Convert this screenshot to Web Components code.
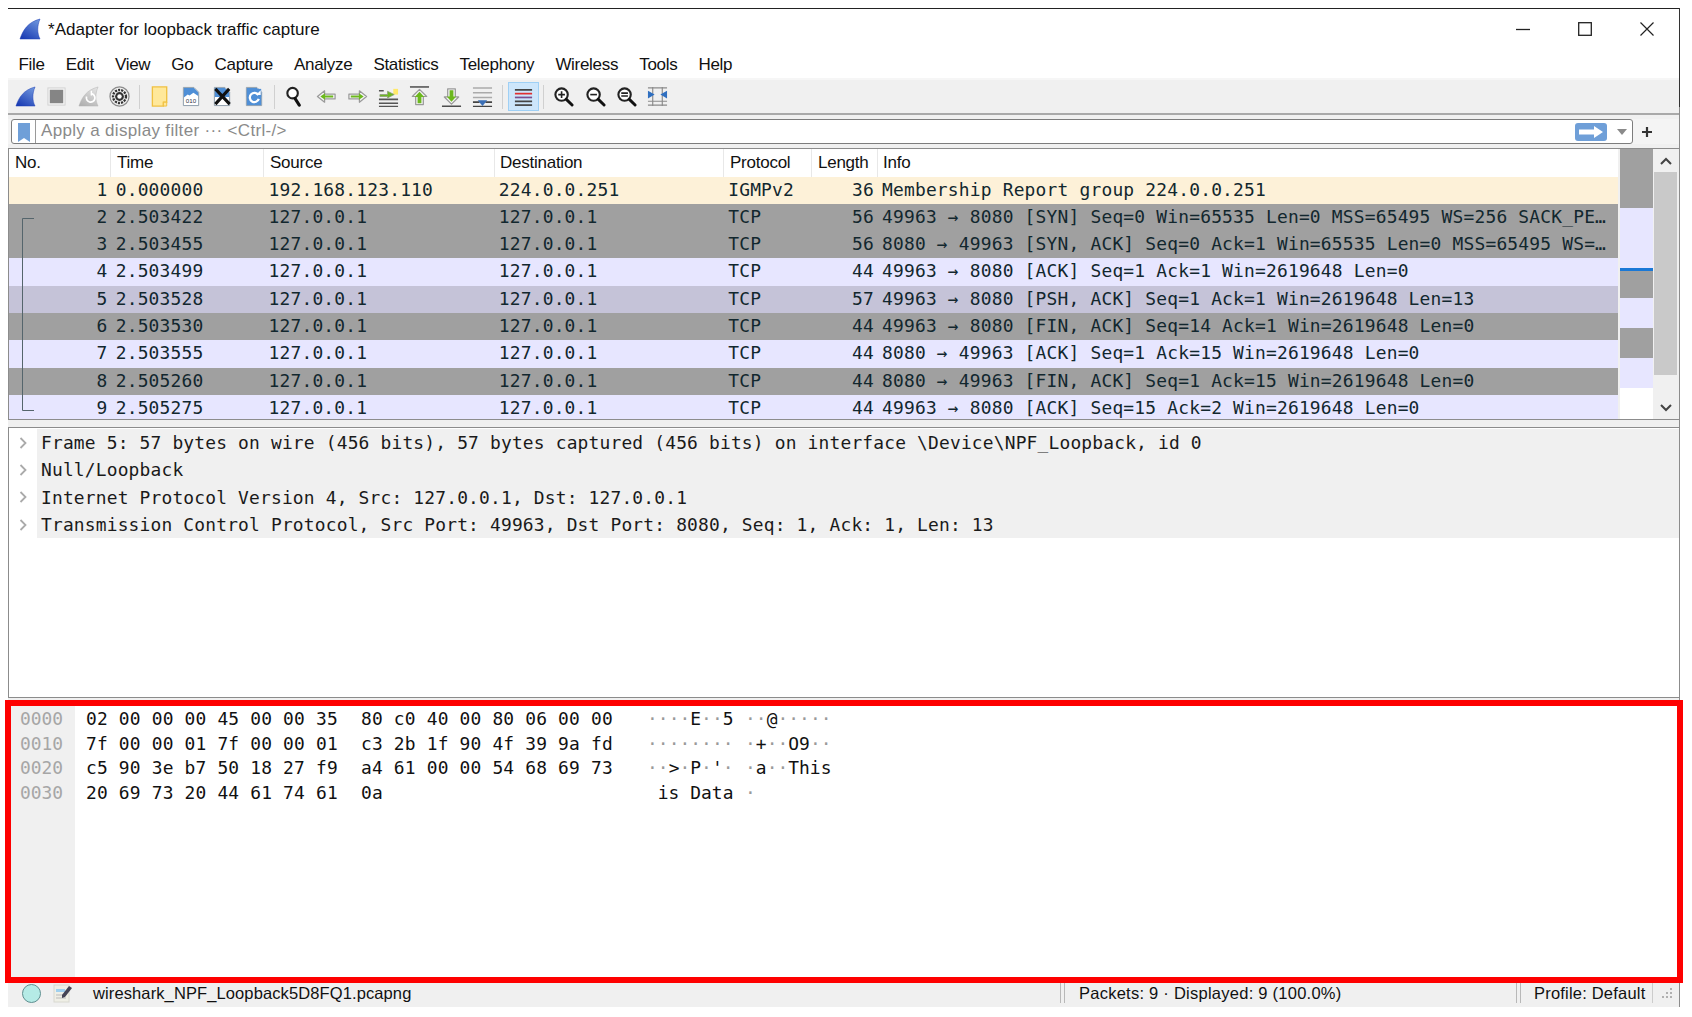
<!DOCTYPE html>
<html><head><meta charset="utf-8"><title>Wireshark</title>
<style>html,body{margin:0;padding:0;background:#fff;overflow:hidden}body{padding:8px 0 0 8px;font-family:"Liberation Sans",sans-serif}</style>
</head><body>
<ws-window>
  <ws-titlebar>*Adapter for loopback traffic capture</ws-titlebar>
  <ws-menubar></ws-menubar>
  <ws-toolbar></ws-toolbar>
  <ws-filter></ws-filter>
  <ws-packets></ws-packets>
  <ws-details></ws-details>
  <ws-bytes></ws-bytes>
  <ws-status></ws-status>
</ws-window>
<script>
const UI='"Liberation Sans",sans-serif', MONO='"DejaVu Sans Mono",monospace';
function shadow(el,html){el.attachShadow({mode:'open'}).innerHTML=html;return el.shadowRoot}
const fin=(top,bot,id)=>`<defs><linearGradient id="${id}" x1=".8" y1="0" x2=".2" y2="1"><stop offset="0" stop-color="${top}"/><stop offset="1" stop-color="${bot}"/></linearGradient></defs><path d="M1 21C4 12 9 4 21 1c-3 7-3 14 0 20z" fill="url(#${id})" stroke="${bot}" stroke-width=".5"/>`;
const page=(inner)=>`<path d="M2.500 1.500h11l5 5v14h-16z" fill="#fff" stroke="#8a9aa8"/><path d="M3 2h10.500l4.500 4.500v5H3z" fill="#4f8fd6"/>${inner}`;
const arrow=(rot)=>`<g transform="rotate(${rot} 11 11)"><path d="M1.500 11 9 5v3.500h11v5H9V17z" fill="#f4f4f4" stroke="#9a9a9a" stroke-width="1.300" stroke-linejoin="round"/><path d="M4.500 11 9.500 7.500v2.500h8.500v2H9.500v2.500z" fill="#6cb81e"/></g>`;
const upArrow=`<path d="M11 3.500 18.500 11H15v8.500H7V11H3.500z" fill="#f4f4f4" stroke="#9a9a9a" stroke-width="1.300" stroke-linejoin="round"/><path d="M11 6l5 5.500h-3V18H9v-6.500H6z" fill="#6cb81e"/>`;
const mag=(inner)=>`<circle cx="9" cy="9" r="6.500" fill="#fff" stroke="#222" stroke-width="2.200"/><path d="M14 14l6 6" stroke="#111" stroke-width="3" stroke-linecap="round"/>${inner}`;
const ICONS={
 start:fin('#6d94dc','#1a3cb4','g1'),
 stop:`<rect x="2" y="2" width="18" height="18" fill="#f2f2f2" stroke="#d2d2d2"/><rect x="4" y="4" width="14" height="14" fill="#858585"/>`,
 restart:fin('#e2e2e2','#b0b0b0','g2')+`<path d="M14 8a4.500 4.500 0 1 1-5 3" fill="none" stroke="#fff" stroke-width="1.800"/><path d="M14 5v5" stroke="#fff" stroke-width="1.500"/>`,
 options:`<circle cx="11" cy="11" r="10" fill="#f0f0f0" stroke="#8c8c8c" stroke-width="1.300"/><circle cx="11" cy="11" r="6.800" fill="none" stroke="#333" stroke-width="2.400" stroke-dasharray="2.200 1.100"/><circle cx="11" cy="11" r="4.600" fill="#333"/><circle cx="11" cy="11" r="2.300" fill="#fff"/>`,
 open:`<path d="M2.500 1h15v16h-3.500v4h-11.500z" fill="#ffe89a" stroke="#f0c040" stroke-width="1.400"/><path d="M14 21v-4h3.500v4z" fill="#ffe89a" stroke="#f0c040"/>`,
 save:`<path d="M2.500 1.500h11l5 5v14h-16z" fill="#fff" stroke="#8a9aa8"/><path d="M3 2h10.500l4.500 4.500v4L13 7l-4 3-2-1-4 3z" fill="#4f8fd6"/><text x="10.500" y="18" font-size="6.500" text-anchor="middle" font-family="${MONO}" fill="#334">010</text>`,
 close:page(`<path d="M3.500 3l15 16M18 3 3.500 19" stroke="#111" stroke-width="3.200"/>`),
 reload:page(`<rect x="3" y="3" width="15" height="17" fill="#4f8fd6"/><path d="M15 9.500a4.800 4.800 0 1 0 .5 4" fill="none" stroke="#fff" stroke-width="2.400"/><path d="M12.500 9.500h5v-5z" fill="#fff"/>`),
 find:`<circle cx="9" cy="7.500" r="5.500" fill="#fff" stroke="#222" stroke-width="2.200"/><path d="M11.500 13l4.500 7" stroke="#111" stroke-width="3.200" stroke-linecap="round"/>`,
 left:arrow(0), right:arrow(180),
 goto:`<path d="M1 14h20M1 18h20M1 21.500h20M1 5h5" stroke="#555" stroke-width="1.600" fill="none"/><path d="M16 3h5v6h-5z" fill="#ffe96a"/><path d="M2 9h8V5.500L17 9l-7 3.500V11H2z" fill="#6cb81e" stroke="#8a9a7a" stroke-width=".8"/>`,
 first:`<path d="M1 1h20" stroke="#444" stroke-width="1.500"/>${upArrow}`,
 last:`<path d="M1 21.200h20" stroke="#444" stroke-width="1.500"/><g transform="rotate(180 11 11) translate(0 -.5)">${upArrow}</g>`,
 bottom:`<path d="M1 2h20M1 7h20M1 12h20" stroke="#aaa" stroke-width="1.500"/><path d="M1 17h7M14 17h7M1 21.500h20" stroke="#444" stroke-width="1.800"/><path d="M6 15h10l-5 6z" fill="#3b6fb6"/>`,
 colorize:`<path d="M2 4h18M2 16h18" stroke="#444" stroke-width="1.800"/><path d="M2 8h18" stroke="#e03030" stroke-width="1.800"/><path d="M2 12h18" stroke="#7a4f90" stroke-width="1.800"/><path d="M2 20h18" stroke="#444" stroke-width="1.800"/>`,
 zin:mag(`<path d="M5.500 9h7M9 5.500v7" stroke="#222" stroke-width="1.700"/>`),
 zout:mag(`<path d="M5.500 9h7" stroke="#222" stroke-width="1.700"/>`),
 zreset:mag(`<path d="M5.500 7.500h7M5.500 10.500h7" stroke="#222" stroke-width="1.700"/>`),
 resize:`<path d="M1 2h20M1 16h20M1 20h20M6 1v20M16 1v20" stroke="#8a8a8a" stroke-width="1.200"/><path d="M1 5l7 4-7 4zM21 5l-7 4 7 4z" fill="#2f6fc0"/>`
};
customElements.define('ws-icon',class extends HTMLElement{connectedCallback(){if(this.shadowRoot)return;const s=this.getAttribute('size')||22;shadow(this,`<style>:host{display:inline-flex}svg{display:block}</style><svg width="${s}" height="${s}" viewBox="0 0 22 22">${ICONS[this.getAttribute('name')]}</svg>`)}});

customElements.define('ws-window',class extends HTMLElement{constructor(){super();shadow(this,`<style>:host{display:flex;flex-direction:column;width:1671px;height:999px;background:#f0f0f0;border-right:1px solid;border-image:linear-gradient(#333 0 100px,#8c8c8c 100px) 1;box-sizing:content-box;position:relative}</style><slot></slot>`)}});

customElements.define('ws-titlebar',class extends HTMLElement{constructor(){super();shadow(this,`<style>
:host{display:flex;align-items:center;height:38px;background:#fff;border-top:1px solid #222;flex:none;color:#111;font:17px ${UI};letter-spacing:.02px}
.logo{margin-left:11px;width:22px;height:22px;margin-right:7px;margin-top:1px}
.t{flex:1;margin-top:4px}
.b{width:62px;display:flex;justify-content:center;margin-top:1px}
.w{display:flex;margin-right:1px}
svg{display:block}
</style><ws-icon class="logo" name="start"></ws-icon><span class="t"><slot></slot></span>
<div class="w"><div class="b"><svg width="14" height="14"><path d="M0 7.500h14" stroke="#222" stroke-width="1.300"/></svg></div>
<div class="b"><svg width="14" height="14"><rect x=".7" y=".7" width="12.600" height="12.600" fill="none" stroke="#222" stroke-width="1.300"/></svg></div>
<div class="b"><svg width="14" height="14"><path d="M.5.500l13 13M13.500.500l-13 13" stroke="#222" stroke-width="1.200"/></svg></div></div>`)}});

customElements.define('ws-menubar',class extends HTMLElement{constructor(){super();const items=['File','Edit','View','Go','Capture','Analyze','Statistics','Telephony','Wireless','Tools','Help'];
shadow(this,`<style>:host{display:flex;height:31px;padding:2px 0 0 0;background:#fff;flex:none;align-items:center;color:#111;font:17px ${UI};letter-spacing:-.3px}
span{padding:0 10.540px;}</style>`+items.map(i=>`<span>${i}</span>`).join(''))}});

customElements.define('ws-toolbar',class extends HTMLElement{constructor(){super();
const g=[['start','stop','restart','options'],['open','save','close','reload'],['find','left','right','goto','first','last','bottom'],['colorize'],['zin','zout','zreset','resize']];
const body=g.map((grp,i)=>grp.map(n=>`<div class="btn${n==='colorize'?' on':''}"><ws-icon name="${n}" size="21"></ws-icon></div>`).join('')).join('<i></i>');
shadow(this,`<style>:host{display:flex;align-items:center;height:33px;padding-left:2px;background:#f0f0f0;border-top:2px solid #f6f6f6;border-bottom:2px solid #a9a9a9;flex:none;box-sizing:content-box;margin-top:-2px}
.btn{width:31.300px;height:29px;display:flex;align-items:center;justify-content:center;box-sizing:border-box}
.on{background:#cde6fb;border:1px solid #9fd0f5}
i{width:1px;height:24px;background:#d0d0d0;margin:0 4.200px}</style>${body}`)}});

customElements.define('ws-filter',class extends HTMLElement{constructor(){super();shadow(this,`<style>:host{display:flex;align-items:center;height:25px;margin:4px 0;padding:0 18px 0 3px;flex:none;background:#f4f4f4}
.box{flex:1;height:25px;box-sizing:border-box;border:1px solid #7d7d7d;border-radius:3px;background:#fff;display:flex;align-items:center;overflow:hidden}
.bm{width:24px;height:100%;display:flex;align-items:flex-start;justify-content:center;border-right:1px solid #9a9a9a;flex:none;padding-top:3px;box-sizing:border-box}
.txt{flex:1;color:#8a8a8a;font:17px/20px ${UI};padding:0 0 2px 5px;letter-spacing:.33px}
.go{width:32px;height:18px;background:#6f9fd8;border-radius:3px;display:flex;align-items:center;justify-content:center;flex:none}
.dd{width:0;height:0;border:5px solid transparent;border-top:6px solid #8a8a8a;border-bottom:0;margin:0 5px 0 10px;flex:none}
.plus{width:28px;display:flex;justify-content:center;flex:none}svg{display:block}</style>
<div class="box"><div class="bm"><svg width="12" height="19"><path d="M0 0h12v19l-6-4-6 4z" fill="#6f9fd8"/></svg></div><div class="txt">Apply a display filter ··· &lt;Ctrl-/&gt;</div>
<div class="go"><svg width="26" height="14"><path d="M1 4.500h15V1l9 6-9 6V9.500H1z" fill="#fff"/></svg></div><div class="dd"></div></div>
<div class="plus"><svg width="12" height="12"><path d="M6 1v10M1 6h10" stroke="#333" stroke-width="2.200"/></svg></div>`)}});

customElements.define('ws-packets',class extends HTMLElement{constructor(){super();
const cols='102px 153px 231px 229px 88px 66px 1fr';
const G='#a0a0a0',L='#e7e6ff',S='#c5c3d8',Y='#fdf1d8';
const I='127.0.0.1';
const rows=[
[1,'0.000000','192.168.123.110','224.0.0.251','IGMPv2',36,'Membership Report group 224.0.0.251',Y],
[2,'2.503422',I,I,'TCP',56,'49963 → 8080 [SYN] Seq=0 Win=65535 Len=0 MSS=65495 WS=256 SACK_PE…',G],
[3,'2.503455',I,I,'TCP',56,'8080 → 49963 [SYN, ACK] Seq=0 Ack=1 Win=65535 Len=0 MSS=65495 WS=…',G],
[4,'2.503499',I,I,'TCP',44,'49963 → 8080 [ACK] Seq=1 Ack=1 Win=2619648 Len=0',L],
[5,'2.503528',I,I,'TCP',57,'49963 → 8080 [PSH, ACK] Seq=1 Ack=1 Win=2619648 Len=13',S],
[6,'2.503530',I,I,'TCP',44,'49963 → 8080 [FIN, ACK] Seq=14 Ack=1 Win=2619648 Len=0',G],
[7,'2.503555',I,I,'TCP',44,'8080 → 49963 [ACK] Seq=1 Ack=15 Win=2619648 Len=0',L],
[8,'2.505260',I,I,'TCP',44,'8080 → 49963 [FIN, ACK] Seq=1 Ack=15 Win=2619648 Len=0',G],
[9,'2.505275',I,I,'TCP',44,'49963 → 8080 [ACK] Seq=15 Ack=2 Win=2619648 Len=0',L]];
const hdr=['No.','Time','Source','Destination','Protocol','Length','Info'];
const map=[[G,59],[L,60],[null,3],[G,27],[L,30],[G,30],[L,30],['#fff',31]];
shadow(this,`<style>:host{display:flex;height:272px;flex:none;border-top:1px solid #8c8c8c;border-bottom:1px solid #8c8c8c;border-left:1px solid #8c8c8c;box-sizing:border-box;background:#f0f0f0;position:relative}
.list{width:1609px;flex:none;position:relative;overflow:hidden;background:#e7e6ff}
.h,.r{display:grid;grid-template-columns:${cols};white-space:pre}
.h{height:27.500px;background:#fff;color:#111;font:17px ${UI};letter-spacing:-.25px;align-items:center}
.h span{border-right:1px solid #e8e8e8;height:100%;display:flex;align-items:center;padding-left:6px;box-sizing:border-box}
.h span:nth-child(4){padding-left:5px}
.h span:last-child{border:0;padding-left:5px}
.r{height:27.330px;font:17.900px/25px ${MONO};color:#12272e;letter-spacing:.2px}
.r span{overflow:hidden;padding-left:4.500px}
.r span.n{text-align:right;padding:0 3.500px 0 0}
.r span.t{padding-left:4.700px}
.r span.d{padding-left:3.800px}
.r span.p{padding-left:4.200px}
.r span.l{text-align:right;padding:0 4px 0 0}
.r span.i{padding-left:4px}
.rel{position:absolute;left:13px;top:69px}
.map{width:33px;margin-left:2px;display:flex;flex-direction:column;flex:none;background:#fff;margin-right:1px}
.map div{flex:none}.mark{height:3px;background:#1a78d6}
.sb{width:23px;flex:none;background:#f0f0f0;display:flex;flex-direction:column;align-items:center}
.ar{height:23px;display:flex;align-items:center;justify-content:center;flex:none}
.th{height:203px;flex:none;background:#c9c9c9;width:100%}
.sp{flex:1}
svg{display:block}</style>
<div class="list"><div class="h">${hdr.map(h=>`<span>${h}</span>`).join('')}</div>
${rows.map(r=>`<div class="r" style="background:${r[7]}"><span class="n">${r[0]}</span><span class="t">${r[1]}</span><span>${r[2]}</span><span class="d">${r[3]}</span><span class="p">${r[4]}</span><span class="l">${r[5]}</span><span class="i">${r[6]}</span></div>`).join('')}
<svg class="rel" width="14" height="195"><path d="M12 .500H.500V192.500H12" fill="none" stroke="#55656c" stroke-width="1"/></svg></div>
<div class="map">${map.map(([c,h])=>c?`<div style="background:${c};height:${h}px"></div>`:`<div class="mark"></div>`).join('')}</div>
<div class="sb"><div class="ar"><svg width="12" height="8"><path d="M1 7l5-5 5 5" fill="none" stroke="#444" stroke-width="2"/></svg></div><div class="th"></div><div class="sp"></div><div class="ar"><svg width="12" height="8"><path d="M1 1l5 5 5-5" fill="none" stroke="#444" stroke-width="2"/></svg></div></div>`)}});

customElements.define('ws-details',class extends HTMLElement{constructor(){super();
const t=['Frame 5: 57 bytes on wire (456 bits), 57 bytes captured (456 bits) on interface \\Device\\NPF_Loopback, id 0','Null/Loopback','Internet Protocol Version 4, Src: 127.0.0.1, Dst: 127.0.0.1','Transmission Control Protocol, Src Port: 49963, Dst Port: 8080, Seq: 1, Ack: 1, Len: 13'];
shadow(this,`<style>:host{display:block;height:271px;margin-top:7px;margin-bottom:3px;flex:none;border:1px solid #8c8c8c;border-right:0;background:#fff;box-sizing:border-box;padding-top:1px}
.r{display:flex;height:27.330px;align-items:center}
.a{width:28px;flex:none;display:flex;justify-content:center;box-sizing:border-box}
.x{flex:1;background:#f0f0f0;height:100%;font:17.900px/27.330px ${MONO};color:#1a1a1a;padding-left:4px;letter-spacing:.18px;white-space:pre}
svg{display:block}</style>${t.map(x=>`<div class="r"><div class="a"><svg width="9" height="12"><path d="M1.500 1l5 5-5 5" fill="none" stroke="#aaa" stroke-width="1.800"/></svg></div><div class="x">${x.replace(/\\/g,'&#92;')}</div></div>`).join('')}`)}});

customElements.define('ws-bytes',class extends HTMLElement{constructor(){super();
const d=(s)=>s.replace(/·/g,'<b>·</b>');
const rows=[['0000','02 00 00 00 45 00 00 35','80 c0 40 00 80 06 00 00','····E··5','··@·····'],
['0010','7f 00 00 01 7f 00 00 01','c3 2b 1f 90 4f 39 9a fd','········','·+··O9··'],
['0020','c5 90 3e b7 50 18 27 f9','a4 61 00 00 54 68 69 73',"··>·P·'·",'·a··This'],
['0030','20 69 73 20 44 61 74 61','0a',' is Data','·']];
shadow(this,`<style>:host{display:flex;height:282px;flex:none;position:relative;background:#fff;font:17.900px/24.700px ${MONO};color:#111;white-space:pre}
.g{width:67px;background:#f0f0f0;color:#a6a6a6;padding:6px 0 0 12px;box-sizing:border-box;flex:none}
.m{padding:6px 0 0 11px;flex:1;min-width:0}
.l{display:flex;height:24.700px}
.h1,.h2{display:block;width:251px;flex:none;letter-spacing:.18px}.h1{margin-right:24px}
.a1,.a2{flex:none;width:87px;letter-spacing:.04px}.a1{margin-left:35px;margin-right:11px}
b{font-weight:normal;color:#9a9a9a}
.frame{position:absolute;left:-3px;right:-4px;top:-1px;bottom:0;border:6px solid #fe0000;pointer-events:none}
</style><div class="g">${rows.map(r=>`<div>${r[0]}</div>`).join('')}</div><div class="m">${rows.map(r=>`<div class="l"><span class="h1">${r[1]}</span><span class="h2">${r[2]}</span><span class="a1">${d(r[3])}</span><span class="a2">${d(r[4])}</span></div>`).join('')}</div><div class="frame"></div>`)}});

customElements.define('ws-status',class extends HTMLElement{constructor(){super();
shadow(this,`<style>:host{display:flex;align-items:center;height:24px;box-sizing:border-box;padding-bottom:4px;flex:1;background:#f0f0f0;color:#111;font:16.500px ${UI};white-space:pre;letter-spacing:.11px}
.c{margin-left:14px;flex:none;width:19px;height:19px;box-sizing:border-box;border-radius:50%;background:#b5ebe6;border:1.500px solid #5e8f90}
.n{margin-left:12px;flex:none}
.f{margin-left:21px;width:967px;flex:none}
.s{width:5px;height:20px;border-left:1px solid #b8b8b8;border-right:1px solid #b8b8b8;flex:none;box-sizing:border-box}
.p{margin-left:14px;width:437px;flex:none;letter-spacing:.25px}
.q{margin-left:13px;width:118px;flex:none;letter-spacing:.2px}
.v{width:1px;height:20px;background:#ccc;flex:none}
.g{margin-left:9px;flex:none}svg{display:block}
</style><div class="c"></div><svg class="n" width="19" height="20" viewBox="0 0 19 20"><rect x="1" y="2" width="15" height="17" fill="#efefe6" stroke="#d8d8d0"/><path d="M3 6h9v3H3z" fill="#9fd0ef"/><path d="M3 12h10M3 15h10" stroke="#bbb"/><path d="M9 12 16 3l3 2-7 9-3 1z" fill="#445"/></svg><div class="f">wireshark_NPF_Loopback5D8FQ1.pcapng</div><div class="s"></div><div class="p">Packets: 9 · Displayed: 9 (100.0%)</div><div class="s"></div><div class="q">Profile: Default</div><div class="v"></div><svg class="g" width="11" height="11"><g fill="#b0b0b0"><rect x="8" y="0" width="2" height="2"/><rect x="4" y="4" width="2" height="2"/><rect x="8" y="4" width="2" height="2"/><rect x="0" y="8" width="2" height="2"/><rect x="4" y="8" width="2" height="2"/><rect x="8" y="8" width="2" height="2"/></g></svg>`)}});
</script>
</body></html>
